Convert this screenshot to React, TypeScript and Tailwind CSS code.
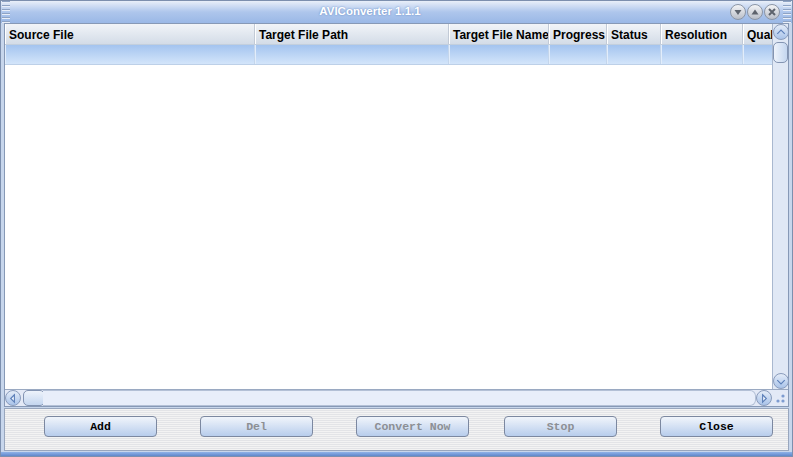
import React from 'react';

const columns = [
  { label: 'Source File', w: 'w-[250px]' },
  { label: 'Target File Path', w: 'w-[194px]' },
  { label: 'Target File Name', w: 'w-[100px]' },
  { label: 'Progress', w: 'w-[58px]' },
  { label: 'Status', w: 'w-[54px]' },
  { label: 'Resolution', w: 'w-[82px]' },
  { label: 'Quality', w: 'w-[60px]' },
];

const buttons = [
  { label: 'Add', enabled: true, ml: 'ml-[39px]' },
  { label: 'Del', enabled: false, ml: 'ml-[43px]' },
  { label: 'Convert Now', enabled: false, ml: 'ml-[43px]' },
  { label: 'Stop', enabled: false, ml: 'ml-[35px]' },
  { label: 'Close', enabled: true, ml: 'ml-[43px]' },
];

function Grip() {
  return (
    <div className="flex flex-col gap-[2px] w-[8px]">
      {[0, 1, 2, 3, 4, 5].map((i) => (
        <div key={i} className="h-[1px] bg-[#8ea3c4] border-b border-[#e8eef8] box-content" />
      ))}
    </div>
  );
}

function TitleButton({ kind }: { kind: 'min' | 'max' | 'close' }) {
  return (
    <div className="w-[16px] h-[16px] rounded-full border border-[#8c96a6] bg-gradient-to-b from-[#f4f5f7] to-[#b9bec8] flex items-center justify-center">
      <svg width="10" height="10" viewBox="0 0 10 10">
        {kind === 'min' && <path d="M1.5 3 L8.5 3 L5 8 Z" fill="#5d636d" />}
        {kind === 'max' && <path d="M1.5 7.5 L8.5 7.5 L5 2.5 Z" fill="#5d636d" />}
        {kind === 'close' && <path d="M2 2 L8 8 M8 2 L2 8" stroke="#5d636d" strokeWidth="2" />}
      </svg>
    </div>
  );
}

function ArrowButton({ dir }: { dir: 'up' | 'down' | 'left' | 'right' }) {
  const paths = {
    up: 'M3.5 9 L7.5 5 L11.5 9',
    down: 'M3.5 6 L7.5 10 L11.5 6',
    left: 'M9 3.5 L5 7.5 L9 11.5 Z',
    right: 'M6 3.5 L10 7.5 L6 11.5 Z',
  };
  return (
    <div className="w-[16px] h-[16px] shrink-0 rounded-full border border-[#8a9cbc] bg-gradient-to-b from-[#e4ecf8] to-[#a9c3e9] flex items-center justify-center">
      <svg width="15" height="15" viewBox="0 0 15 15">
        <path d={paths[dir]} fill={dir === 'left' || dir === 'right' ? '#eef4fc' : 'none'} stroke="#5c7fb8" strokeWidth="1.2" />
      </svg>
    </div>
  );
}

export default function App() {
  return (
    <div className="w-[793px] h-[457px] flex flex-col bg-[#c7d6ec] border border-[#7c8fae] overflow-hidden font-['Liberation_Sans',sans-serif]">
      {/* Title bar */}
      <div className="h-[22px] shrink-0 flex items-center px-[1px] bg-gradient-to-b from-[#e9eff9] via-[#aec6ec] to-[#9ab8e6]">
        <Grip />
        <div className="flex-1 text-center text-white text-[11.5px] font-bold [text-shadow:0_0_2px_#5f84c0]">
          AVIConverter 1.1.1
        </div>
        <div className="flex gap-[1px] mr-[3px]">
          <TitleButton kind="min" />
          <TitleButton kind="max" />
          <TitleButton kind="close" />
        </div>
        <Grip />
      </div>

      {/* Table area */}
      <div className="flex-1 flex flex-col px-[3px]">
        <div className="flex-1 flex flex-col border border-[#8799b6] bg-white">
          <div className="flex-1 flex min-h-0">
            <div className="flex-1 overflow-hidden">
              <div className="flex h-[21px] bg-gradient-to-b from-[#f1f4f8] to-[#d3dce7] border-b border-[#c3cfdd]">
                {columns.map((c) => (
                  <div
                    key={c.label}
                    className={`${c.w} shrink-0 pl-[4px] pt-[1px] flex items-center text-[12px] font-bold text-black border-r border-[#c2cad6] shadow-[inset_1px_0_0_#ffffff] whitespace-nowrap overflow-hidden`}
                  >
                    {c.label}
                  </div>
                ))}
              </div>
              <div className="flex h-[20px] bg-gradient-to-b from-[#a4c4ef] to-[#d3e5fa] border-b border-[#bdd0e8]">
                {columns.map((c) => (
                  <div key={c.label} className={`${c.w} shrink-0 border-r border-[#c4d6ec] shadow-[inset_1px_0_0_#e2edfb]`} />
                ))}
              </div>
            </div>
            {/* Vertical scrollbar */}
            <div className="w-[16px] shrink-0 flex flex-col bg-[#e0e8f5] border-l border-[#a9b8cf]">
              <ArrowButton dir="up" />
              <div className="flex-1 pt-[2px]">
                <div className="h-[21px] rounded-[5px] border border-[#8394b2] bg-gradient-to-r from-[#eef3fb] to-[#c4d6ef]" />
              </div>
              <ArrowButton dir="down" />
            </div>
          </div>
          {/* Horizontal scrollbar */}
          <div className="h-[17px] shrink-0 flex items-center bg-[#e3e9f6] border-t border-[#9aa9c2]">
            <ArrowButton dir="left" />
            <div className="flex-1 h-[16px] flex items-center pl-[2px]">
              <div className="w-[22px] h-[16px] rounded-[5px] border border-[#8394b2] bg-gradient-to-b from-[#eef3fb] to-[#c4d6ef]" />
              <div className="flex-1 h-[16px] ml-[-2px] rounded-r-[6px] border border-l-0 border-[#b3c0d6] bg-[#e8eefa]" />
            </div>
            <ArrowButton dir="right" />
            <div className="w-[16px] h-[16px] shrink-0 flex items-end justify-end p-[2px]">
              <svg width="11" height="11" viewBox="0 0 11 11">
                <circle cx="8" cy="3" r="1.6" fill="#7d9bd0" />
                <circle cx="3" cy="8" r="1.6" fill="#7d9bd0" />
                <circle cx="8" cy="8" r="1.6" fill="#7d9bd0" />
              </svg>
            </div>
          </div>
        </div>

        {/* Button panel */}
        <div className="h-[43px] shrink-0 mt-[1px] mb-[1px] flex items-start pt-[7px] border border-[#98a6bd] bg-[repeating-linear-gradient(to_bottom,#f3f3f3_0px,#f3f3f3_1px,#e3e4e7_1px,#e3e4e7_2px)]">
          {buttons.map((b) => (
            <div
              key={b.label}
              className={`${b.ml} w-[113px] h-[21px] shrink-0 rounded-[4px] border border-[#7c88a0] bg-gradient-to-b from-[#f1f5fb] to-[#b8cdec] flex items-center justify-center font-['Liberation_Mono',monospace] text-[11.5px] font-bold ${b.enabled ? 'text-black' : 'text-[#8c8f94]'}`}
            >
              {b.label}
            </div>
          ))}
        </div>
      </div>
      <div className="h-[4px] shrink-0 bg-gradient-to-b from-[#8fb2e8] to-[#5f88cc]" />
    </div>
  );
}
